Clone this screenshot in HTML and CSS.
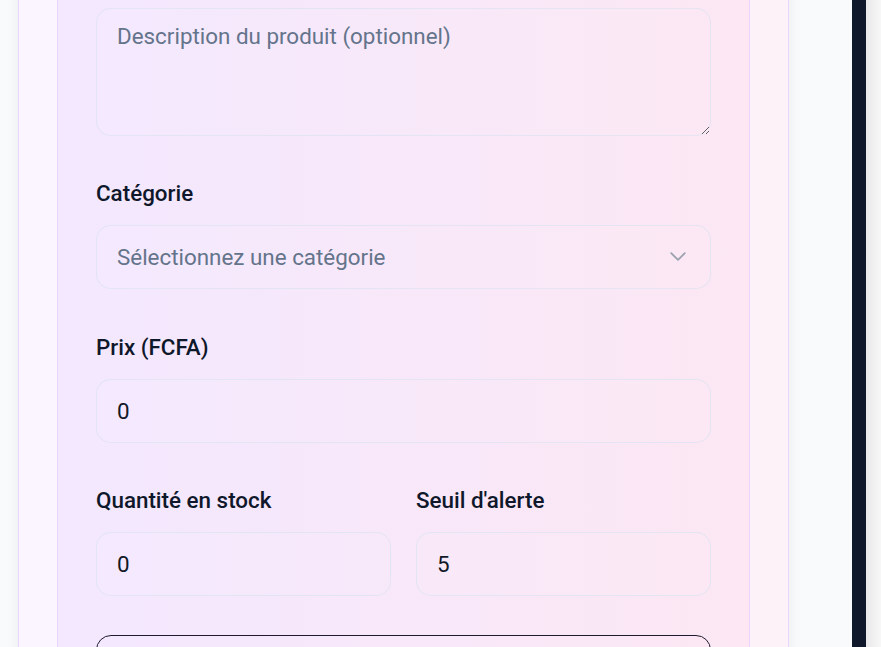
FILE: index.html
```html
<!DOCTYPE html>
<html lang="fr">
<head>
<meta charset="utf-8">
<title>Produit</title>
<link rel="stylesheet" href="styles.css">
</head>
<body>
<div class="page">
  <div class="main">
    <div class="outer">
      <form class="inner">
        <div class="field">
          <textarea class="control area" placeholder="Description du produit (optionnel)"></textarea>
        </div>
        <div class="field">
          <label class="label">Catégorie</label>
          <div class="select-wrap">
            <select class="control select">
              <option>Sélectionnez une catégorie</option>
            </select>
            <svg class="chev" width="16" height="9" viewBox="0 0 16 9"><polyline points="1.2,1.2 8,7.8 14.8,1.2" fill="none" stroke="#9ca3af" stroke-width="1.8" stroke-linecap="round" stroke-linejoin="round"/></svg>
          </div>
        </div>
        <div class="field">
          <label class="label">Prix (FCFA)</label>
          <input class="control" type="text" value="0">
        </div>
        <div class="grid">
          <div class="field">
            <label class="label">Quantité en stock</label>
            <input class="control" type="text" value="0">
          </div>
          <div class="field">
            <label class="label">Seuil d'alerte</label>
            <input class="control" type="text" value="5">
          </div>
        </div>
        <button class="btn" type="button">Enregistrer</button>
      </form>
    </div>
  </div>
  <div class="dark"></div>
  <div class="edge"></div>
</div>
</body>
</html>
```

FILE: styles.css
```css
html, body {
  margin: 0;
  padding: 0;
}
body {
  background: #f8fafc;
  font-family: Roboto, "Liberation Sans", sans-serif;
}
.page {
  display: flex;
  height: 647px;
  overflow: hidden;
}
.main {
  width: 852px;
  padding-left: 18px;
  box-sizing: border-box;
  flex: none;
}
.outer {
  width: 771px;
  box-sizing: border-box;
  margin-top: -60px;
  border: 1px solid #e9d5ff;
  border-radius: 20px;
  background: linear-gradient(to right, #faf5ff, #fdf2f8);
  padding: 38px;
  box-shadow: 0 0 14px rgba(15, 23, 42, 0.06);
}
.inner {
  display: flex;
  flex-direction: column;
  gap: 42px;
  border: 1px solid #e9d5ff;
  border-radius: 20px;
  background: linear-gradient(to right, #f3e8ff, #fce7f3);
  padding: 28px 38px 60px;
}
.field {
  display: flex;
  flex-direction: column;
}
.label {
  font-size: 22.4px;
  line-height: 30px;
  font-weight: 500;
  color: #0f172a;
  margin-bottom: 17px;
}
.control {
  box-sizing: border-box;
  width: 100%;
  height: 64px;
  border: 1px solid rgba(220, 225, 240, 0.75);
  border-radius: 15px;
  background: rgba(255, 255, 255, 0.08);
  padding: 16px 20px;
  font-family: Roboto, "Liberation Sans", sans-serif;
  font-size: 22.4px;
  line-height: 30px;
  color: #111827;
  outline: none;
  margin: 0;
}
.control::placeholder {
  color: #64748b;
}
.area {
  height: 128px;
  padding-top: 12px;
  display: block;
}
.select-wrap {
  position: relative;
  margin-bottom: 1px;
}
.select {
  appearance: none;
  -webkit-appearance: none;
  color: #64748b;
}
.chev {
  position: absolute;
  right: 25px;
  top: 27px;
}
.grid {
  display: grid;
  grid-template-columns: 1fr 1fr;
  gap: 25px;
}
.btn {
  height: 63px;
  margin-top: -3px;
  border: 1px solid #1e1b2e;
  border-radius: 15px;
  background: transparent;
  font-family: Roboto, "Liberation Sans", sans-serif;
  font-size: 22.4px;
  color: #0f172a;
}
.dark {
  width: 14px;
  flex: none;
  background: #0f172a;
}
.edge {
  flex: 1;
  background: linear-gradient(to right, #e9e9ea, #f7f7f8);
}
```
